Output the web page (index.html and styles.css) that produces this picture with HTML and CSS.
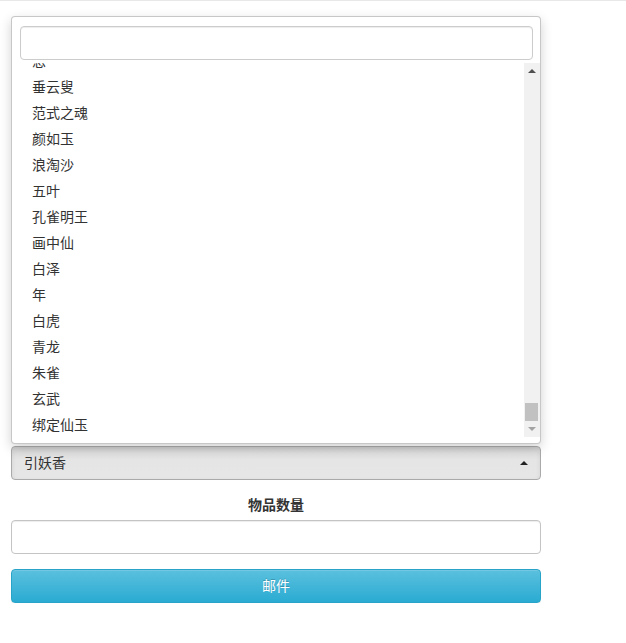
FILE: index.html
```html
<!DOCTYPE html>
<html lang="zh-CN">
<head>
<meta charset="utf-8">
<title>邮件</title>
<link rel="stylesheet" href="styles.css">
</head>
<body>
<div class="topbar"></div>
<form class="form">
  <div class="group">
    <label class="label">角色ID</label>
    <input class="input" type="text">
  </div>
  <div class="group">
    <label class="label">服务器</label>
    <input class="input" type="text">
  </div>
  <div class="group">
    <label class="label">邮件标题</label>
    <input class="input" type="text">
  </div>
  <div class="group">
    <label class="label">邮件内容</label>
    <input class="input" type="text">
  </div>
  <div class="actions">
    <button class="btn" type="button">查询</button>
  </div>
  <div class="group">
    <label class="label">物品</label>
    <div class="select-wrap">
      <div class="select">
        <span class="select-text">引妖香</span>
        <span class="select-arrow"></span>
      </div>
      <div class="drop">
        <div class="drop-search">
          <input class="search-input" type="text">
        </div>
        <div class="results">
          <ul class="result-list">
            <li>恩</li>
            <li>垂云叟</li>
            <li>范式之魂</li>
            <li>颜如玉</li>
            <li>浪淘沙</li>
            <li>五叶</li>
            <li>孔雀明王</li>
            <li>画中仙</li>
            <li>白泽</li>
            <li>年</li>
            <li>白虎</li>
            <li>青龙</li>
            <li>朱雀</li>
            <li>玄武</li>
            <li>绑定仙玉</li>
          </ul>
          <div class="scrollbar">
            <div class="sb-btn"><span class="sb-up"></span></div>
            <div class="sb-track"><div class="sb-thumb"></div></div>
            <div class="sb-btn"><span class="sb-down"></span></div>
          </div>
        </div>
      </div>
    </div>
  </div>
  <div class="group">
    <label class="label">物品数量</label>
    <input class="input" type="text">
  </div>
  <div>
    <button class="btn" type="button">邮件</button>
  </div>
</form>
</body>
</html>
```
FILE: styles.css
```css
* { box-sizing: border-box; }
html, body {
  margin: 0;
  padding: 0;
  background: #fff;
}
body {
  font-family: "Noto Sans CJK SC", "Liberation Sans", sans-serif;
  font-size: 14px;
  color: #333;
}
.topbar {
  height: 2px;
  border-bottom: 1px solid #e8e8e8;
  margin-top: -1px;
}
.form {
  width: 530px;
  margin: 0 0 0 11px;
  padding-top: 71px;
}
.group {
  margin-bottom: 15px;
}
.label {
  display: block;
  height: 20px;
  line-height: 18px;
  margin-bottom: 5px;
  text-align: center;
  font-weight: bold;
  font-size: 14px;
}
.input {
  display: block;
  width: 100%;
  height: 34px;
  margin: 0;
  padding: 6px 12px;
  border: 1px solid #c4c4c4;
  border-radius: 4px;
  box-shadow: inset 0 1px 1px rgba(0,0,0,.075);
  font: inherit;
  background: #fff;
}
.actions {
  margin-bottom: 19px;
}
.btn {
  display: block;
  width: 100%;
  height: 34px;
  margin: 0;
  padding: 0 0 2px 0;
  border: 1px solid #28a4c9;
  border-radius: 4px;
  background-image: linear-gradient(to bottom, #5bc0de 0, #2aabd2 100%);
  box-shadow: inset 0 1px 0 rgba(255,255,255,.15), 0 1px 1px rgba(0,0,0,.075);
  color: #fff;
  text-shadow: 0 -1px 0 rgba(0,0,0,.2);
  font-family: "Noto Sans CJK SC", "Liberation Sans", sans-serif;
  font-size: 14px;
  line-height: 30px;
  text-align: center;
}
.select-wrap {
  position: relative;
}
.select {
  display: flex;
  align-items: center;
  justify-content: space-between;
  height: 34px;
  padding: 0 12px 0 12px;
  border: 1px solid #aaa;
  border-radius: 4px;
  background-image: linear-gradient(to bottom, #dadada 0, #e5e5e5 40%, #e6e6e6 100%);
  box-shadow: inset 0 2px 5px rgba(0,0,0,.08);
}
.select-text {
  line-height: 30px;
  padding-bottom: 2px;
  color: #333;
}
.select-arrow {
  width: 0;
  height: 0;
  border-left: 4px solid transparent;
  border-right: 4px solid transparent;
  border-bottom: 4px solid #222;
}
.drop {
  position: absolute;
  left: 0;
  right: 0;
  bottom: calc(100% + 2px);
  background: #fff;
  border: 1px solid rgba(0,0,0,.22);
  border-radius: 4px;
  box-shadow: 0 4px 12px rgba(0,0,0,.18);
  padding-bottom: 6px;
  z-index: 10;
}
.drop-search {
  padding: 9px 7px 3px 8px;
}
.search-input {
  display: block;
  width: 100%;
  height: 34px;
  margin: 0;
  border: 1px solid #ccc;
  border-radius: 4px;
  box-shadow: inset 0 1px 1px rgba(0,0,0,.075);
  background: #fff;
  font: inherit;
}
.results {
  display: flex;
  height: 374px;
  overflow: hidden;
}
.result-list {
  flex: 1;
  list-style: none;
  margin: -16px 0 0 0;
  padding: 0;
}
.result-list li {
  height: 26px;
  line-height: 26px;
  padding-left: 20px;
  color: #333;
  font-size: 14px;
}
.scrollbar {
  width: 16px;
  display: flex;
  flex-direction: column;
  background: #f1f1f1;
}
.sb-btn {
  height: 16px;
  display: flex;
  align-items: center;
  justify-content: center;
}
.sb-up {
  width: 0;
  height: 0;
  border-left: 4px solid transparent;
  border-right: 4px solid transparent;
  border-bottom: 4px solid #505050;
}
.sb-down {
  width: 0;
  height: 0;
  border-left: 4px solid transparent;
  border-right: 4px solid transparent;
  border-top: 4px solid #a3a3a3;
}
.sb-track {
  flex: 1;
  display: flex;
  flex-direction: column;
  justify-content: flex-end;
  padding: 0 2px 0 1px;
}
.sb-thumb {
  height: 18px;
  background: #c1c1c1;
}
```
